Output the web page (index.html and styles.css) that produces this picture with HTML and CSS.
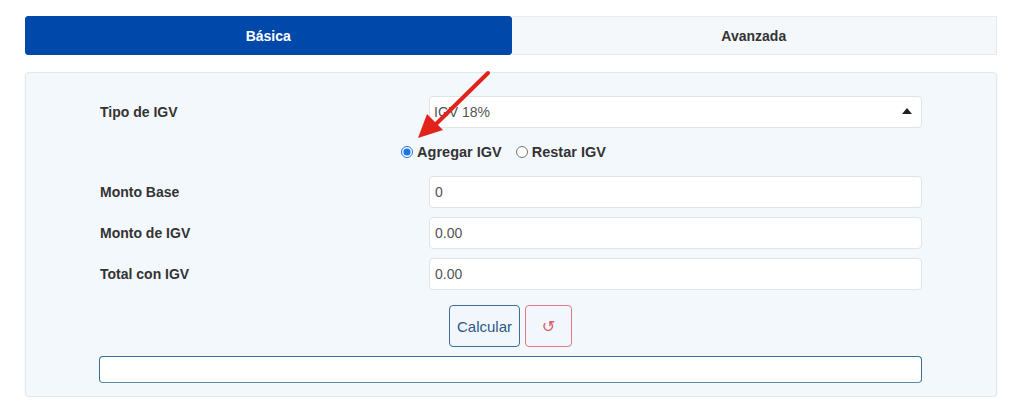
FILE: index.html
```html
<!DOCTYPE html>
<html lang="es">
<head>
<meta charset="utf-8">
<title>Calculadora IGV</title>
<link rel="stylesheet" href="styles.css">
</head>
<body>
<div class="page">
  <div class="tabs">
    <div class="tab tab-active">Básica</div>
    <div class="tab">Avanzada</div>
  </div>
  <div class="panel">
    <div class="row">
      <label class="label">Tipo de IGV</label>
      <div class="select"><span>IGV 18%</span><span class="caret"></span></div>
    </div>
    <div class="radios">
      <label class="radio"><input type="radio" name="modo" checked> Agregar IGV</label>
      <label class="radio"><input type="radio" name="modo"> Restar IGV</label>
    </div>
    <div class="row">
      <label class="label">Monto Base</label>
      <div class="input">0</div>
    </div>
    <div class="row">
      <label class="label">Monto de IGV</label>
      <div class="input">0.00</div>
    </div>
    <div class="row">
      <label class="label">Total con IGV</label>
      <div class="input">0.00</div>
    </div>
    <div class="buttons">
      <button class="btn btn-calc">Calcular</button>
      <button class="btn btn-reset">↺</button>
    </div>
    <div class="output"></div>
  </div>
  <svg class="arrow" width="80" height="80" viewBox="0 0 80 80">
    <line x1="75" y1="3" x2="22" y2="55" stroke="#e2231c" stroke-width="4" stroke-linecap="round"/>
    <polygon points="5,68 14,44 30,60" fill="#e2231c"/>
  </svg>
</div>
</body>
</html>
```
FILE: styles.css
```css
* { box-sizing: border-box; }
html, body { margin: 0; padding: 0; background: #ffffff; }
body {
  font-family: "Liberation Sans", Arial, sans-serif;
  font-size: 14px;
  color: #333333;
}
.page {
  position: relative;
  width: 972px;
  margin-left: 25px;
  padding-top: 16px;
}
.tabs {
  display: flex;
  height: 39px;
}
.tab {
  flex: 1;
  display: flex;
  align-items: center;
  justify-content: center;
  font-weight: bold;
  font-size: 14px;
  color: #333;
  background: #f4f8fb;
  border: 1px solid #e6ebef;
  border-left: none;
}
.tab-active {
  background: #0049ab;
  color: #ffffff;
  border: 1px solid #0049ab;
  border-radius: 3px;
}
.panel {
  margin-top: 17px;
  background: #f3f8fc;
  border: 1px solid #e2e8ec;
  border-radius: 4px;
  box-shadow: 0 1px 2px rgba(0,0,0,0.08);
  padding: 23px 74px 13px 73px;
}
.row {
  display: grid;
  grid-template-columns: 330px 1fr;
  align-items: center;
  margin-bottom: 9px;
}
.label {
  font-weight: bold;
  color: #333;
  padding-left: 1px;
}
.select, .input {
  height: 32px;
  background: #ffffff;
  border: 1px solid #dfe4e8;
  border-radius: 4px;
  color: #555555;
  display: flex;
  align-items: center;
  padding: 0 5px;
}
.select {
  justify-content: space-between;
  padding-left: 4px;
  padding-right: 9px;
}
.caret {
  width: 0;
  height: 0;
  border-left: 5px solid transparent;
  border-right: 5px solid transparent;
  border-bottom: 6px solid #222;
  margin-top: -3px;
}
.radios {
  display: flex;
  justify-content: center;
  gap: 14px;
  margin: 12px 0 12px;
  padding-right: 16px;
  padding-left: 2px;
  height: 24px;
  align-items: center;
  font-weight: bold;
  font-size: 14.5px;
  color: #333;
}
.radio {
  display: flex;
  align-items: center;
  gap: 3px;
}
.radio input {
  margin: 0 1px 0 0;
  width: 12px;
  height: 12px;
  accent-color: #1a73e8;
}
.buttons {
  display: flex;
  justify-content: center;
  gap: 5px;
  margin-top: 15px;
}
.btn {
  height: 42px;
  border-radius: 4px;
  background: #f1f7fc;
  font-family: "Liberation Sans", Arial, sans-serif;
  font-size: 15px;
  padding: 0;
}
.btn-calc {
  width: 71px;
  border: 1px solid #3c6f95;
  color: #2c5a86;
}
.btn-reset {
  width: 47px;
  border: 1px solid #e07b83;
  color: #dc5a62;
  font-family: "DejaVu Sans", sans-serif;
  font-size: 16px;
}
.output {
  margin-top: 9px;
  height: 27px;
  background: #ffffff;
  border: 1px solid #3b6d90;
  border-bottom-color: #5b8aa8;
  border-radius: 4px;
}
.arrow {
  position: absolute;
  left: 388px;
  top: 70px;
}
```
